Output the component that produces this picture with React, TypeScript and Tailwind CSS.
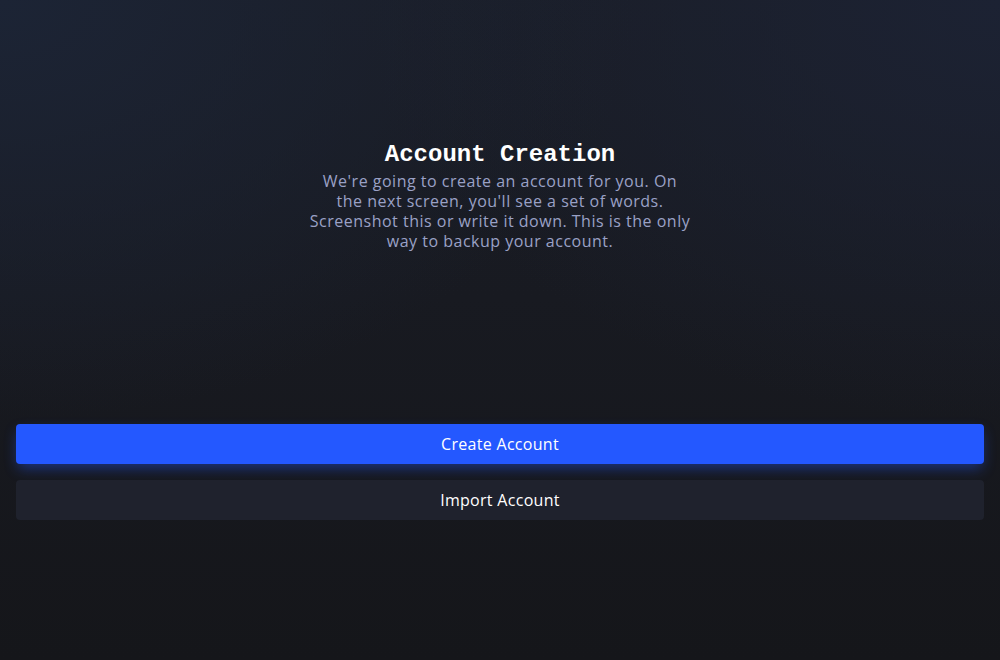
import React from "react";

const App: React.FC = () => {
  return (
    <div className="relative min-h-[660px] w-full overflow-hidden bg-[#16181d] bg-[radial-gradient(ellipse_at_0%_0%,#1c2435_0%,transparent_45%),radial-gradient(ellipse_at_100%_0%,#1c2233_0%,transparent_45%),linear-gradient(180deg,#1a1d26_0%,#181a21_45%,#15161a_100%)] font-['Open_Sans',sans-serif]">
      <div className="flex flex-col px-4 pt-[139px]">
        <div className="flex flex-col items-center text-center">
          <h1 className="font-['Liberation_Mono',monospace] text-[24px] font-bold leading-8 text-white">
            Account Creation
          </h1>
          <p className="mt-0 max-w-[384px] text-[16px] leading-5 tracking-[0.5px] text-[#9aa1c6]">
            We're going to create an account for you. On the next screen,
            you'll see a set of words. Screenshot this or write it down. This
            is the only way to backup your account.
          </p>
        </div>

        <div className="mt-[173px] flex flex-col gap-4">
          <button className="h-10 w-full rounded bg-[#2458ff] text-[16px] tracking-[0.3px] text-white shadow-[0_6px_14px_-2px_rgba(36,88,255,0.45)]">
            Create Account
          </button>
          <button className="h-10 w-full rounded bg-[#1f222d] text-[16px] tracking-[0.3px] text-white">
            Import Account
          </button>
        </div>
      </div>
    </div>
  );
};

export default App;
